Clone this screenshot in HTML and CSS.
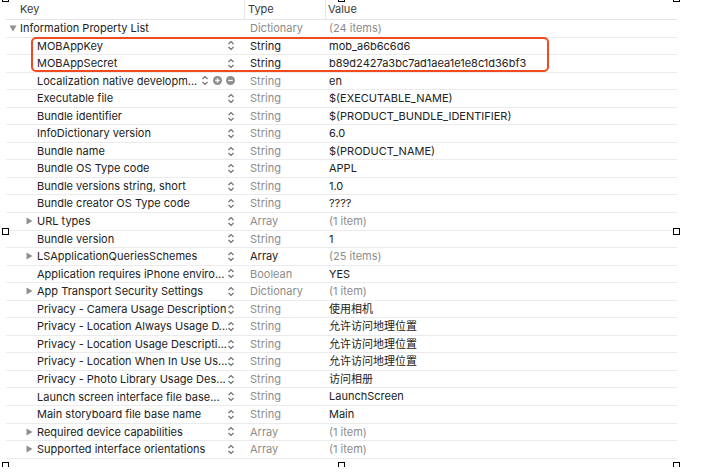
FILE: index.html
```html
<!DOCTYPE html>
<html lang="en">
<head>
    <meta charset="UTF-8">
    <meta name="viewport" content="width=device-width, initial-scale=1.0">
    <title>Info.plist</title>
    <link rel="stylesheet" href="styles.css">
</head>
<body>
    <div class="shot">
        <div class="plist">
            <div class="head">
                <div class="h-key">Key</div>
                <div class="h-type">Type</div>
                <div class="h-val">Value</div>
            </div>
            <div id="rows"></div>
        </div>

        <!-- edited keys highlight -->
        <div class="highlight"></div>

        <!-- image resize handles -->
        <span class="handle tl"></span>
        <span class="handle tm"></span>
        <span class="handle tr"></span>
        <span class="handle ml"></span>
        <span class="handle mr"></span>
        <span class="handle bl"></span>
        <span class="handle bm"></span>
        <span class="handle br"></span>
    </div>

    <script>
        // level, triangle, key, type, value, flags
        // flags: t = type dark, v = value dim, n = no stepper, p = plus/minus buttons
        const rows = [
            [0, 'down', 'Information Property List', 'Dictionary', '(24 items)', 'vn'],
            [1, '', 'MOBAppKey', 'String', 'mob_a6b6c6d6', 't'],
            [1, '', 'MOBAppSecret', 'String', 'b89d2427a3bc7ad1aea1e1e8c1d36bf3', 't'],
            [1, '', 'Localization native developm...', 'String', 'en', 'p'],
            [1, '', 'Executable file', 'String', '$(EXECUTABLE_NAME)', ''],
            [1, '', 'Bundle identifier', 'String', '$(PRODUCT_BUNDLE_IDENTIFIER)', ''],
            [1, '', 'InfoDictionary version', 'String', '6.0', ''],
            [1, '', 'Bundle name', 'String', '$(PRODUCT_NAME)', ''],
            [1, '', 'Bundle OS Type code', 'String', 'APPL', ''],
            [1, '', 'Bundle versions string, short', 'String', '1.0', ''],
            [1, '', 'Bundle creator OS Type code', 'String', '????', ''],
            [1, 'right', 'URL types', 'Array', '(1 item)', 'v'],
            [1, '', 'Bundle version', 'String', '1', ''],
            [1, 'right', 'LSApplicationQueriesSchemes', 'Array', '(25 items)', 'tv'],
            [1, '', 'Application requires iPhone enviro...', 'Boolean', 'YES', ''],
            [1, 'right', 'App Transport Security Settings', 'Dictionary', '(1 item)', 'v'],
            [1, '', 'Privacy - Camera Usage Description', 'String', '使用相机', ''],
            [1, '', 'Privacy - Location Always Usage D...', 'String', '允许访问地理位置', ''],
            [1, '', 'Privacy - Location Usage Descripti...', 'String', '允许访问地理位置', ''],
            [1, '', 'Privacy - Location When In Use Us...', 'String', '允许访问地理位置', ''],
            [1, '', 'Privacy - Photo Library Usage Des...', 'String', '访问相册', ''],
            [1, '', 'Launch screen interface file base...', 'String', 'LaunchScreen', ''],
            [1, '', 'Main storyboard file base name', 'String', 'Main', ''],
            [1, 'right', 'Required device capabilities', 'Array', '(1 item)', 'v'],
            [1, 'right', 'Supported interface orientations', 'Array', '(1 item)', 'v']
        ];

        const stepper = '<svg class="stepper" width="8" height="11" viewBox="0 0 8 11"><path d="M1.5 4 L4 1.5 L6.5 4 M1.5 7 L4 9.5 L6.5 7" fill="none" stroke="#6e6e6e" stroke-width="1.2"/></svg>';
        const plus = '<svg class="btn" width="9" height="9" viewBox="0 0 9 9"><circle cx="4.5" cy="4.5" r="4.5" fill="#8e8e8e"/><path d="M2.3 4.5 H6.7 M4.5 2.3 V6.7" stroke="#fff" stroke-width="1.3"/></svg>';
        const minus = '<svg class="btn" width="9" height="9" viewBox="0 0 9 9"><circle cx="4.5" cy="4.5" r="4.5" fill="#8e8e8e"/><path d="M2.3 4.5 H6.7" stroke="#fff" stroke-width="1.3"/></svg>';
        const tri = {
            down: '<svg width="8" height="7" viewBox="0 0 8 7"><path d="M0.5 0.5 H7.5 L4 6.5 Z" fill="#909090"/></svg>',
            right: '<svg width="7" height="8" viewBox="0 0 7 8"><path d="M0.5 0.5 V7.5 L6.5 4 Z" fill="#909090"/></svg>'
        };

        const list = document.getElementById('rows');
        rows.forEach(([level, t, key, type, value, flags]) => {
            const row = document.createElement('div');
            row.className = 'row';
            let controls = '';
            if (flags.includes('p')) controls = stepper + plus + minus;
            else if (!flags.includes('n')) controls = stepper;
            row.innerHTML =
                '<div class="key lvl' + level + '">' +
                    '<span class="tri">' + (tri[t] || '') + '</span>' +
                    '<span class="name">' + key + '</span>' +
                    '<span class="ctrl">' + controls + '</span>' +
                '</div>' +
                '<div class="type' + (flags.includes('t') ? '' : ' dim') + '">' + type + '</div>' +
                '<div class="val' + (flags.includes('v') ? ' dim' : '') + '">' + value + '</div>';
            list.appendChild(row);
        });
    </script>
</body>
</html>
```

FILE: styles.css
```css
* {
    margin: 0;
    padding: 0;
    box-sizing: border-box;
}

body {
    background: #fff;
    font-family: Inter, "Noto Sans CJK SC", sans-serif;
    font-size: 11px;
    color: #222;
    overflow: hidden;
}

.shot {
    position: relative;
    width: 671px;
    height: 468px;
    margin: -1px 0 0 6px;
}

.head {
    display: grid;
    grid-template-columns: 239px 81px 1fr;
    height: 21px;
    border-bottom: 1px solid #e4e4e4;
    color: #3a3a3a;
}

.head div {
    line-height: 20px;
}

.h-key {
    padding-left: 14px;
    border-right: 1px solid #e6e6e6;
}

.h-type {
    padding-left: 3px;
    border-right: 1px solid #e6e6e6;
}

.h-val {
    padding-left: 2px;
}

.row {
    display: grid;
    grid-template-columns: 239px 81px 1fr;
    height: 17.55px;
    border-bottom: 1px solid #ebebeb;
    line-height: 16.5px;
    white-space: nowrap;
}

.key {
    display: flex;
    align-items: center;
    padding-right: 10px;
    overflow: hidden;
}

.key.lvl0 {
    padding-left: 3px;
}

.key.lvl1 {
    padding-left: 20px;
}

.tri {
    display: flex;
    align-items: center;
    width: 11px;
    flex-shrink: 0;
}

.name {
    flex: 1;
    overflow: hidden;
}

.ctrl {
    display: flex;
    align-items: center;
    gap: 5px;
}

.stepper {
    display: block;
}

.btn {
    display: block;
    margin-left: -1px;
}

.type {
    padding-left: 5px;
    color: #222;
}

.val {
    padding-left: 3px;
    overflow: hidden;
}

.dim {
    color: #8c8c8c;
}

.highlight {
    position: absolute;
    left: 25px;
    top: 38px;
    width: 518px;
    height: 35px;
    border: 2px solid #f24a1f;
    border-radius: 5px;
}

.handle {
    position: absolute;
    width: 7px;
    height: 7px;
    background: #fff;
    border: 1px solid #000;
}

.tl { left: -4px; top: -4px; }
.tm { left: 332px; top: -4px; }
.tr { left: 667px; top: -4px; }
.ml { left: -4px; top: 229px; }
.mr { left: 667px; top: 229px; }
.bl { left: -4px; top: 463px; }
.bm { left: 332px; top: 463px; }
.br { left: 667px; top: 463px; }
```
